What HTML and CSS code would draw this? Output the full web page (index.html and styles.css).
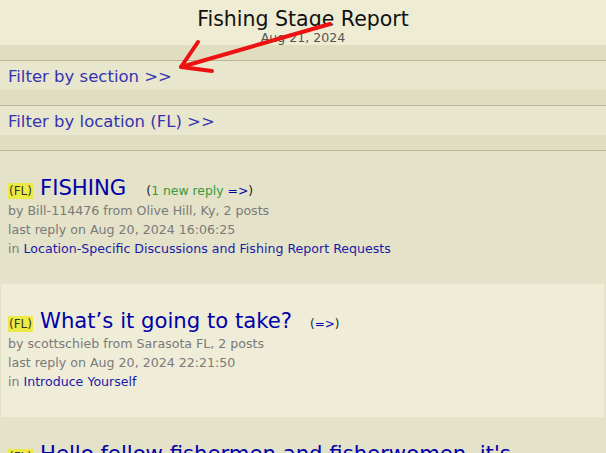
FILE: index.html
```html
<!DOCTYPE html>
<html lang="en">
<head>
    <meta charset="UTF-8">
    <title>Fishing Stage Report</title>
    <link rel="stylesheet" href="styles.css">
</head>
<body>
    <div class="header">
        <h1>Fishing Stage Report</h1>
        <div class="date">Aug 21, 2024</div>
    </div>

    <div class="band"></div>
    <div class="filter"><a href="#">Filter by section &gt;&gt;</a></div>
    <div class="band"></div>
    <div class="filter"><a href="#">Filter by location (FL) &gt;&gt;</a></div>
    <div class="band"></div>

    <div class="topic">
        <div class="topic-title">
            <span class="tag">(FL)</span>
            <a href="#" class="title-link">FISHING</a>
            <span class="new">(<span class="green">1 new reply</span> <a href="#">=&gt;</a>)</span>
        </div>
        <div class="meta">by Bill-114476 from Olive Hill, Ky, 2 posts</div>
        <div class="meta">last reply on Aug 20, 2024 16:06:25</div>
        <div class="meta">in <a href="#">Location-Specific Discussions and Fishing Report Requests</a></div>
    </div>

    <div class="topic alt">
        <div class="topic-title">
            <span class="tag">(FL)</span>
            <a href="#" class="title-link">What’s it going to take?</a>
            <span class="new small">(<a href="#">=&gt;</a>)</span>
        </div>
        <div class="meta">by scottschieb from Sarasota FL, 2 posts</div>
        <div class="meta">last reply on Aug 20, 2024 22:21:50</div>
        <div class="meta">in <a href="#">Introduce Yourself</a></div>
    </div>

    <div class="topic">
        <div class="topic-title">
            <span class="tag">(FL)</span>
            <a href="#" class="title-link">Hello fellow fishermen and fisherwomen, it's</a>
        </div>
    </div>

    <!-- red annotation arrow drawn over the page -->
    <svg class="arrow" width="606" height="100" viewBox="0 0 606 100">
        <path d="M330 24 L181 67" />
        <path d="M198 42 L181 67 L212 71" />
    </svg>
</body>
</html>
```

FILE: styles.css
```css
body {
    margin: 0;
    font-family: "DejaVu Sans", Verdana, sans-serif;
    background-color: #e4e2c8;
    position: relative;
    overflow: hidden;
    height: 453px;
}
a {
    text-decoration: none;
}
.header {
    background-color: #eeecd3;
    text-align: center;
    height: 45px;
    padding-top: 7px;
    box-sizing: border-box;
}
h1 {
    margin: 0;
    font-size: 20.5px;
    font-weight: normal;
    color: #111;
    line-height: 24px;
}
.date {
    font-size: 12.6px;
    color: #555;
    line-height: 14px;
}
.band {
    height: 15px;
    background-color: #e0ddc0;
    border-bottom: 1px solid #b7b499;
}
.filter {
    height: 29px;
    background-color: #e8e6cd;
    padding: 2px 0 0 8px;
    box-sizing: border-box;
    display: flex;
    align-items: center;
}
.filter a {
    color: #3434b0;
    font-size: 16.5px;
}
.topic {
    background-color: #e4e2c8;
    padding: 24px 8px 25px;
    height: 133px;
    box-sizing: border-box;
}
.topic.alt {
    background-color: #efedd8;
    margin: 0 2px 0 1px;
    padding-left: 7px;
}
.topic-title {
    display: flex;
    align-items: baseline;
    white-space: nowrap;
    height: 26px;
}
.tag {
    background-color: #eeea44;
    color: #333;
    font-size: 12px;
    padding: 1px 1px;
    margin-right: 7px;
}
.title-link {
    color: #0000aa;
    font-size: 21.2px;
}
.new {
    margin-left: 20px;
    font-size: 12.4px;
    color: #222;
}
.new.small {
    margin-left: 18px;
    font-size: 12px;
}
.new a {
    color: #0000aa;
}
.green {
    color: #3a9a3a;
}
.meta {
    font-size: 12.6px;
    color: #7a7a7a;
    line-height: 19px;
}
.meta a {
    color: #1a1aaa;
}
.arrow {
    position: absolute;
    top: 0;
    left: 0;
    fill: none;
    stroke: #ee1111;
    stroke-width: 4;
    stroke-linecap: round;
    stroke-linejoin: round;
}
```
